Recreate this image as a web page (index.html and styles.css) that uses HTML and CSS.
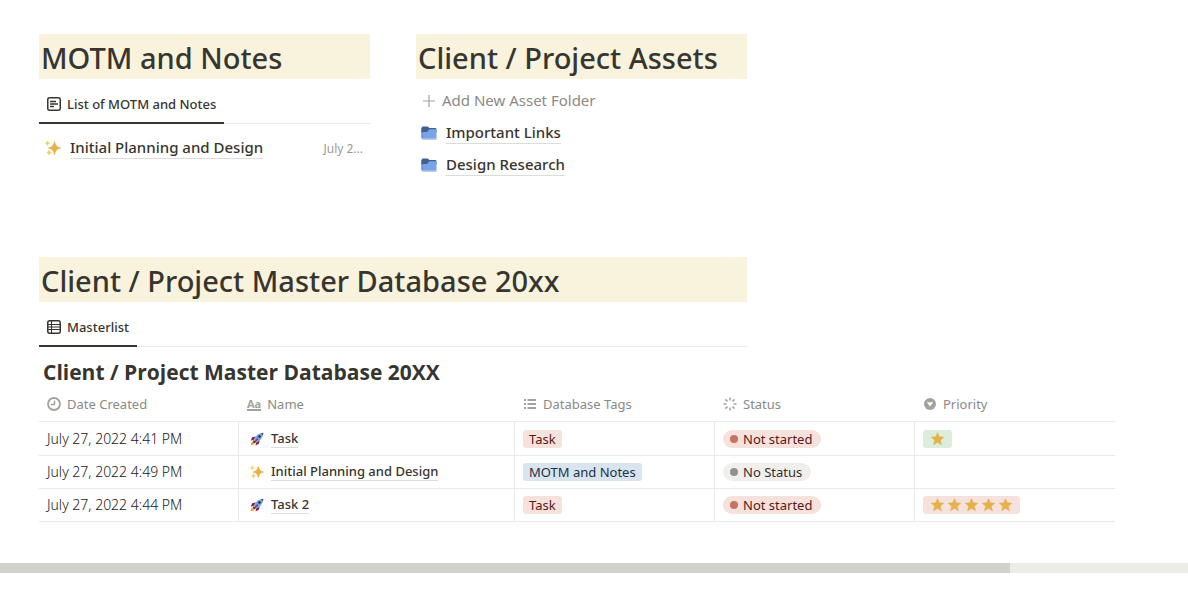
FILE: index.html
```html
<!DOCTYPE html>
<html lang="en">
<head>
<meta charset="utf-8">
<meta name="viewport" content="width=device-width, initial-scale=1">
<title>Client / Project Hub</title>
<link rel="stylesheet" href="styles.css">
</head>
<body>
<svg class="sprite" aria-hidden="true">
  <symbol id="i-list" viewBox="0 0 14 14"><rect x=".75" y=".75" width="12.5" height="12.5" rx="2" fill="none" stroke="currentColor" stroke-width="1.5"/><path d="M3 4.500h6M3 7h8M3 9.500h4" stroke="currentColor" stroke-width="1.3"/></symbol>
  <symbol id="i-table" viewBox="0 0 14 14"><rect x=".75" y=".75" width="12.5" height="12.5" rx="2" fill="none" stroke="currentColor" stroke-width="1.5"/><path d="M1 4.500h12M1 7h12M1 9.500h12M4.500 1v12" stroke="currentColor" stroke-width="1.1"/></symbol>
  <symbol id="i-clock" viewBox="0 0 14 14"><circle cx="7" cy="7" r="6" fill="none" stroke="currentColor" stroke-width="1.8"/><path d="M7.500 3.500v4H4" fill="none" stroke="currentColor" stroke-width="1.4"/></symbol>
  <symbol id="i-bullets" viewBox="0 0 14 14"><path d="M1 3h2M1 7h2M1 11h2M4.500 3H13M4.500 7H13M4.500 11H13" stroke="currentColor" stroke-width="1.8"/></symbol>
  <symbol id="i-status" viewBox="0 0 14 14"><path d="M7 .5v3M7 10.500v3M.5 7h3M10.500 7h3M2.400 2.400l2.100 2.100M9.500 9.500l2.100 2.100M11.600 2.400L9.500 4.500M4.500 9.500l-2.100 2.100" stroke="currentColor" stroke-width="1.500"/></symbol>
  <symbol id="i-select" viewBox="0 0 14 14"><circle cx="7" cy="7" r="6" fill="currentColor"/><path d="M3.800 5.200h6.400L7 9.500z" fill="#fff"/></symbol>
  <symbol id="i-plus" viewBox="0 0 14 14"><path d="M7 1v12M1 7h12" stroke="currentColor" stroke-width="1.200"/></symbol>
  <symbol id="i-folder" viewBox="0 0 16 16"><path d="M.5 3Q.5 1.500 2 1.500h4.500Q8 1.500 8 3h6q1.500 0 1.500 1.200V8H.5z" fill="#42608f"/><path d="M.5 3v10.500H2V3z" fill="#42608f"/><path d="M8.200 4.200H14.500q1 0 1 1v8.300q0 1-1 1H2q-.8 0-.8-1V7.800q0-.8.9-.8h4.200z" fill="#7aa3e8"/><path d="M1.300 13.200h14.200q0 1.300-1 1.300H2q-.7 0-.7-1.300z" fill="#a9c4ef"/></symbol>
  <symbol id="i-sparkle" viewBox="0 0 16 16"><path d="M9.500 1.500Q10.200 7 15.500 8 10.200 9 9.500 14.500 8.800 9 3.500 8 8.800 7 9.500 1.500z" fill="#e6b04a" stroke="#e6b04a" stroke-width=".8"/><path d="M2.500 1Q2.700 2.800 4.500 3.200 2.700 3.600 2.500 5.400 2.300 3.600.5 3.200 2.300 2.800 2.500 1zM4 10Q4.300 12 6.200 12.500 4.300 13 4 15 3.700 13 1.800 12.500 3.700 12 4 10z" fill="#eed05c" stroke="#eed05c" stroke-width=".7"/></symbol>
  <symbol id="i-rocket" viewBox="0 0 16 16"><path d="M6 5 2.500 6 .8 10 5 8.500zM11 10l-1 3.500-3.800 2L7.500 11z" fill="#8b1a35"/><path d="M3 10.500Q1 11.500 .8 15.200 4.500 15 5.500 13z" fill="#eaa63c"/><path d="M3.500 11.500Q4 6 9 2.800 12 1 15.200.8 15 4 13.200 7 10 12 4.500 12.500z" fill="#7aa3e8"/><path d="M12.500 1.300Q14 .8 15.200.8 15.200 2.500 14.600 4z" fill="#3b5683"/><circle cx="10.800" cy="5.200" r="1.500" fill="#1d2940"/><path d="M3.800 9.500l2.700 2.800-2 .2-1-1zM4.500 11.500l4-4.300.8.8-4 4.200z" fill="#8b1a35"/></symbol>
  <symbol id="i-star" viewBox="0 0 14 14"><path d="M7 .8l1.700 4 4.500.4-3.400 3 1.100 4.500L7 10.300l-3.900 2.400 1.100-4.500-3.400-3 4.500-.4z" fill="#e6b04a" stroke="#e6b04a" stroke-width=".6"/></symbol>
</svg>

<main class="page">
  <div class="columns">
    <section>
      <h1 class="banner">MOTM and Notes</h1>
      <div class="tabs" role="tablist">
        <button class="tab" type="button" role="tab" aria-selected="true"><svg class="icon"><use href="#i-list"/></svg>List of MOTM and Notes</button>
      </div>
      <div class="note">
        <svg class="emoji"><use href="#i-sparkle"/></svg>
        <a class="page-link" href="#planning">Initial Planning and Design</a>
        <span class="note-date">July 2...</span>
      </div>
    </section>
    <section>
      <h1 class="banner">Client / Project Assets</h1>
      <div class="assets">
        <button class="add" type="button"><svg class="icon"><use href="#i-plus"/></svg>Add New Asset Folder</button>
        <div class="asset"><svg class="emoji"><use href="#i-folder"/></svg><a class="page-link" href="#links">Important Links</a></div>
        <div class="asset"><svg class="emoji"><use href="#i-folder"/></svg><a class="page-link" href="#research">Design Research</a></div>
      </div>
    </section>
  </div>

  <section class="database">
    <div class="database-head">
      <h1 class="banner">Client / Project Master Database 20xx</h1>
      <div class="tabs" role="tablist">
        <button class="tab" type="button" role="tab" aria-selected="true"><svg class="icon"><use href="#i-table"/></svg>Masterlist</button>
      </div>
      <h2 class="database-title">Client / Project Master Database 20XX</h2>
    </div>
    <table class="grid">
      <colgroup><col class="col"><col class="col-name"><col class="col"><col class="col"><col class="col"></colgroup>
      <thead>
        <tr>
          <th scope="col"><span class="field"><svg class="icon"><use href="#i-clock"/></svg>Date Created</span></th>
          <th scope="col"><span class="field"><span class="title-icon" aria-hidden="true">Aa</span>Name</span></th>
          <th scope="col"><span class="field"><svg class="icon"><use href="#i-bullets"/></svg>Database Tags</span></th>
          <th scope="col"><span class="field"><svg class="icon"><use href="#i-status"/></svg>Status</span></th>
          <th scope="col"><span class="field"><svg class="icon"><use href="#i-select"/></svg>Priority</span></th>
        </tr>
      </thead>
      <tbody>
        <tr>
          <td class="date">July 27, 2022 4:41 PM</td>
          <td><span class="name"><svg class="emoji"><use href="#i-rocket"/></svg><a class="page-link" href="#task">Task</a></span></td>
          <td><span class="tag red">Task</span></td>
          <td><span class="tag pill red">Not started</span></td>
          <td><span class="tag green" role="img" aria-label="1 star"><svg class="star"><use href="#i-star"/></svg></span></td>
        </tr>
        <tr>
          <td class="date">July 27, 2022 4:49 PM</td>
          <td><span class="name"><svg class="emoji"><use href="#i-sparkle"/></svg><a class="page-link" href="#planning">Initial Planning and Design</a></span></td>
          <td><span class="tag blue">MOTM and Notes</span></td>
          <td><span class="tag pill gray">No Status</span></td>
          <td></td>
        </tr>
        <tr>
          <td class="date">July 27, 2022 4:44 PM</td>
          <td><span class="name"><svg class="emoji"><use href="#i-rocket"/></svg><a class="page-link" href="#task2">Task 2</a></span></td>
          <td><span class="tag red">Task</span></td>
          <td><span class="tag pill red">Not started</span></td>
          <td><span class="tag red" role="img" aria-label="5 stars"><svg class="star"><use href="#i-star"/></svg><svg class="star"><use href="#i-star"/></svg><svg class="star"><use href="#i-star"/></svg><svg class="star"><use href="#i-star"/></svg><svg class="star"><use href="#i-star"/></svg></span></td>
        </tr>
      </tbody>
    </table>
  </section>
</main>
<div class="scroll-track"><div class="scroll-thumb"></div></div>
</body>
</html>
```
FILE: styles.css
```css
* { box-sizing: border-box; }

body {
  margin: 0;
  background: #fff;
  color: #37352f;
  font-family: "Noto Sans", "Open Sans", sans-serif;
  font-size: 13px;
  line-height: 18px;
}

button {
  border: 0;
  background: none;
  color: inherit;
  font: inherit;
  cursor: pointer;
}

.sprite { position: absolute; width: 0; height: 0; }
.icon { flex: none; width: 14px; height: 14px; }
.emoji { flex: none; width: 16px; height: 16px; }

.page { padding: 34px 40px 0 39px; }

.columns {
  display: grid;
  grid-template-columns: 1fr 1fr;
  gap: 46px;
  max-width: 708px;
}

.banner {
  margin: 0;
  padding: 3px 2px 1px;
  background: #f9f3dd;
  font-size: 29px;
  font-weight: 500;
  line-height: 41px;
}

.tabs {
  display: flex;
  height: 45px;
  border-bottom: 1px solid #e9e9e7;
}

.tab {
  display: flex;
  align-items: center;
  gap: 6px;
  height: 45px;
  padding: 6px 8px 0;
  border-bottom: 2px solid #37352f;
  font-weight: 500;
}

.note {
  display: flex;
  align-items: center;
  gap: 9px;
  padding: 13px 7px 0 6px;
  font-size: 15px;
  line-height: 21px;
}

.page-link {
  border-bottom: 1px solid #dcdcda;
  color: inherit;
  font-weight: 500;
  text-decoration: none;
  white-space: nowrap;
}

.note-date {
  margin-left: auto;
  color: #9b9a97;
  font-size: 12px;
  white-space: nowrap;
}

.assets {
  display: grid;
  gap: 11px;
  padding: 11px 5px 0;
  font-size: 15px;
  line-height: 21px;
}

.add {
  display: flex;
  align-items: center;
  gap: 6px;
  padding: 0 1px;
  color: #8b8a86;
}

.add .icon { color: #a3a29e; }

.asset { display: flex; align-items: center; gap: 9px; height: 21px; }

.database { margin-top: 82px; }
.database-head { max-width: 708px; }

.database-title {
  margin: 0;
  padding: 11px 4px 0;
  font-family: "Open Sans", "Noto Sans", sans-serif;
  font-size: 21px;
  font-weight: 700;
  line-height: 29px;
}

.grid {
  width: 1076px;
  border-spacing: 0;
  table-layout: fixed;
}

.col { width: 200px; }
.col-name { width: 276px; }

.grid th {
  height: 35px;
  padding: 0 8px;
  border-bottom: 1px solid #e9e9e7;
  color: #8b8a86;
  font-weight: 400;
  text-align: left;
}

.grid td {
  height: 33px;
  padding: 0 8px;
  border-right: 1px solid #e9e9e7;
  border-bottom: 1px solid #e9e9e7;
}

.grid tr:first-child td { height: 34px; }
.grid td:last-child { border-right: 0; }
.grid .date { color: #22201b; font-size: 14px; font-weight: 300; }

.field { display: flex; align-items: center; gap: 6px; }
.field .icon { color: #a3a29e; }

.title-icon {
  border-bottom: 2px solid #a3a29e;
  color: #a3a29e;
  font-size: 11px;
  font-weight: 700;
  line-height: 11px;
}

.name { display: flex; align-items: center; gap: 7px; padding-left: 3px; }
.name .emoji { width: 14px; height: 14px; }
.name .page-link { line-height: 17px; }

.tag {
  display: flex;
  align-items: center;
  width: max-content;
  height: 18px;
  padding: 0 6px;
  border-radius: 3px;
}

.red { background: #f6e2dd; color: #5d1715; }
.blue { background: #d9e4ef; color: #183347; }
.green { background: #ddeddb; }
.gray { background: #f0efed; color: #32302c; }

.pill { gap: 5px; padding: 0 9px 0 7px; border-radius: 9px; }
.pill::before { width: 8px; height: 8px; border-radius: 50%; background: #c86f66; content: ""; }
.pill.gray::before { background: #91918e; }

.star { width: 17px; height: 14px; }

.scroll-track { margin-top: 41px; background: #ecece8; }
.scroll-thumb { width: 85%; height: 10px; background: #d2d2cc; }
```
